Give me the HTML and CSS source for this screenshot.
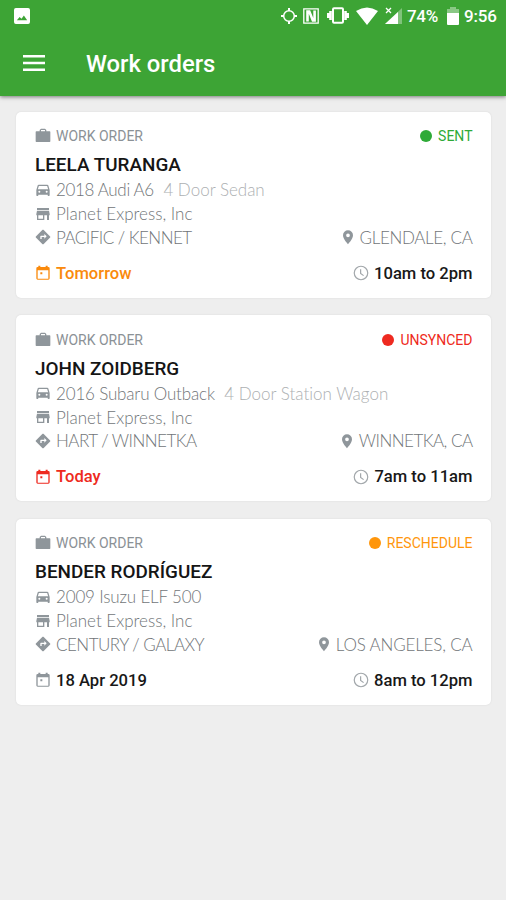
FILE: index.html
```html
<!DOCTYPE html>
<html lang="en">
<head>
<meta charset="utf-8">
<title>Work orders</title>
<link rel="stylesheet" href="styles.css">
</head>
<body>
<svg class="defs" aria-hidden="true">
  <symbol id="case" viewBox="0 0 24 24"><path d="M9 1h6l2 2v2h5a1 1 0 0 1 1 1v14a1 1 0 0 1-1 1H2a1 1 0 0 1-1-1V6a1 1 0 0 1 1-1h5V3zm0 2v2h6V3z" fill-rule="evenodd"/></symbol>
  <symbol id="car" viewBox="0 0 24 24"><path fill-rule="evenodd" d="M19.900 5c-.2-.6-.8-1-1.400-1h-13c-.7 0-1.200.4-1.400 1L2 12v8c0 .6.4 1 1 1h1c.6 0 1-.4 1-1v-1h14v1c0 .6.4 1 1 1h1c.6 0 1-.4 1-1v-8zM6.500 16a1.500 1.500 0 1 1 0-3 1.500 1.500 0 0 1 0 3zm11 0a1.500 1.500 0 1 1 0-3 1.500 1.500 0 0 1 0 3zM4.300 11l1.500-5h12.400l1.500 5z"/></symbol>
  <symbol id="store" viewBox="0 0 24 24"><path fill-rule="evenodd" d="M21 3H3v3h18zm1 11v-2l-1-5H3l-1 5v2h1v7h11v-7h4v7h3v-7zm-10 5H5v-5h7z"/></symbol>
  <symbol id="road" viewBox="0 0 24 24"><path fill-rule="evenodd" d="M22.700 11.300l-10-10a1 1 0 0 0-1.400 0l-10 10a1 1 0 0 0 0 1.400l10 10a1 1 0 0 0 1.400 0l10-10a1 1 0 0 0 0-1.400zM14 14.500V12h-4v3H8v-4a1 1 0 0 1 1-1h5V7.500l3.500 3.500z"/></symbol>
  <symbol id="calendar" viewBox="0 0 24 24"><path fill-rule="evenodd" d="M20 3h-1V1h-3v2H8V1H5v2H4a2 2 0 0 0-2 2v15c0 1.100.9 2 2 2h16a2 2 0 0 0 2-2V5a2 2 0 0 0-2-2zm0 17.500H4V8h16zM8 11h3v3H8z"/></symbol>
  <symbol id="pin" viewBox="0 0 24 24"><path fill-rule="evenodd" d="M12 2a7.500 7.500 0 0 0-7.500 7.500C4.500 15 12 23 12 23s7.500-8 7.500-13.500A7.500 7.500 0 0 0 12 2zm0 10.300a2.800 2.800 0 1 1 0-5.600 2.800 2.800 0 0 1 0 5.600z"/></symbol>
  <symbol id="clock" viewBox="0 0 24 24"><path d="M12 3a9 9 0 1 0 0 18 9 9 0 0 0 0-18zM11.500 7v5.500l4 3" fill="none" stroke="currentColor" stroke-width="1.600"/></symbol>
</svg>
<header class="top">
  <div class="status">
    <svg class="photo" viewBox="0 0 17 17"><path fill-rule="evenodd" d="M2 0h13a2 2 0 0 1 2 2v13a2 2 0 0 1-2 2H2a2 2 0 0 1-2-2V2a2 2 0 0 1 2-2zm1 13h11l-3.500-5-2.500 3.500-2-2z"/></svg>
    <svg class="locate" viewBox="0 0 16 18"><circle cx="8" cy="9" r="5.300" fill="none" stroke="currentColor" stroke-width="1.500"/><path d="M7 1h2v3H7zm0 13h2v3H7zM0 8h3v2H0zm13 0h3v2h-3z"/></svg>
    <svg class="nfc" viewBox="0 0 16 16"><path d="M.8.800h14.400v14.400H.8z" fill="none" stroke="currentColor" stroke-width="1.300"/><path d="M4.500 13.500V3.500h1.800l3.600 9h1.700v-10" fill="none" stroke="currentColor" stroke-width="2.600"/></svg>
    <svg class="vibrate" viewBox="0 0 22 17"><rect x="6" y="1.200" width="10" height="14.600" rx="1" fill="none" stroke="currentColor" stroke-width="2"/><path d="M2.200 4h2.600v9H2.200zM0 6h2.300v5H0zm17.200-2h2.600v9h-2.600zm2.500 2H22v5h-2.300z"/></svg>
    <svg class="wifi" viewBox="0 0 22 18"><path d="M0 4Q11-3 22 4L11 18z"/></svg>
    <svg class="signal" viewBox="0 0 17 17"><path d="M17 1v16H0z" opacity=".35"/><path d="M13 5v12H0z"/><path d="M1 1l5 5m0-5L1 6" fill="none" stroke="currentColor" stroke-width="1.300"/></svg>
    <span class="percent">74%</span>
    <svg class="battery" viewBox="0 0 12 18"><path d="M3 0h6v2h3v5H0V2h3z" opacity=".4"/><path d="M0 6h12v11a1 1 0 0 1-1 1H1a1 1 0 0 1-1-1z"/></svg>
    <span class="time">9:56</span>
  </div>
  <div class="bar">
    <svg class="menu" viewBox="0 0 22 16"><path d="M0 0h22v2.600H0zm0 6.700h22v2.600H0zm0 6.700h22V16H0z"/></svg>
    <h1>Work orders</h1>
  </div>
</header>
<main>
  <article class="card">
    <div class="row head"><svg class="icon case"><use href="#case"/></svg><span class="kind">WORK ORDER</span><span class="state green"><i></i>SENT</span></div>
    <h2>LEELA TURANGA</h2>
    <div class="row"><svg class="icon"><use href="#car"/></svg><span class="snug">2018 Audi A6</span><span class="body">4 Door Sedan</span></div>
    <div class="row"><svg class="icon"><use href="#store"/></svg><span>Planet Express, Inc</span></div>
    <div class="row"><svg class="icon"><use href="#road"/></svg><span class="street">PACIFIC / KENNET</span><span class="right"><svg class="icon pin"><use href="#pin"/></svg><span class="snug">GLENDALE, CA</span></span></div>
    <div class="row when"><svg class="icon orange"><use href="#calendar"/></svg><span class="orange">Tomorrow</span><span class="right"><svg class="icon clock"><use href="#clock"/></svg><span>10am to 2pm</span></span></div>
  </article>
  <article class="card">
    <div class="row head"><svg class="icon case"><use href="#case"/></svg><span class="kind">WORK ORDER</span><span class="state red"><i></i>UNSYNCED</span></div>
    <h2>JOHN ZOIDBERG</h2>
    <div class="row"><svg class="icon"><use href="#car"/></svg><span class="easy">2016 Subaru Outback</span><span class="body">4 Door Station Wagon</span></div>
    <div class="row"><svg class="icon"><use href="#store"/></svg><span>Planet Express, Inc</span></div>
    <div class="row"><svg class="icon"><use href="#road"/></svg><span class="street">HART / WINNETKA</span><span class="right"><svg class="icon pin"><use href="#pin"/></svg><span class="street">WINNETKA, CA</span></span></div>
    <div class="row when"><svg class="icon red"><use href="#calendar"/></svg><span class="red">Today</span><span class="right"><svg class="icon clock"><use href="#clock"/></svg><span>7am to 11am</span></span></div>
  </article>
  <article class="card">
    <div class="row head"><svg class="icon case"><use href="#case"/></svg><span class="kind">WORK ORDER</span><span class="state amber"><i></i>RESCHEDULE</span></div>
    <h2>BENDER RODRÍGUEZ</h2>
    <div class="row"><svg class="icon"><use href="#car"/></svg><span class="easy">2009 Isuzu ELF 500</span></div>
    <div class="row"><svg class="icon"><use href="#store"/></svg><span>Planet Express, Inc</span></div>
    <div class="row"><svg class="icon"><use href="#road"/></svg><span class="street">CENTURY / GALAXY</span><span class="right"><svg class="icon pin"><use href="#pin"/></svg><span class="easy">LOS ANGELES, CA</span></span></div>
    <div class="row when"><svg class="icon"><use href="#calendar"/></svg><span>18 Apr 2019</span><span class="right"><svg class="icon clock"><use href="#clock"/></svg><span>8am to 12pm</span></span></div>
  </article>
</main>
</body>
</html>
```
FILE: styles.css
```css
* { box-sizing: border-box; }
body { margin: 0; min-height: 900px; background: #eee; font-family: Roboto, "Liberation Sans", sans-serif; }
svg { display: block; flex: none; fill: currentColor; }
.defs { position: absolute; width: 0; height: 0; }
.top { height: 96px; background: #3da435; color: #fff; box-shadow: 0 1px 4px rgba(0,0,0,.5); }
.status { display: flex; align-items: center; height: 31px; padding: 0 9px 0 14px; font-size: 17px; font-weight: 500; }
.photo { width: 16px; height: 16px; margin-right: auto; }
.locate { width: 16px; height: 18px; margin-right: 6px; }
.nfc { width: 16px; height: 16px; margin-right: 8px; }
.vibrate { width: 22px; height: 17px; margin-right: 7px; }
.wifi { width: 22px; height: 18px; margin-right: 7px; }
.signal { width: 17px; height: 17px; margin-right: 5px; }
.percent { width: 32px; margin-right: 8px; letter-spacing: -.3px; }
.battery { width: 12px; height: 18px; margin-right: 5px; }
.time { width: 33px; letter-spacing: -.2px; }
.bar { display: flex; align-items: center; height: 64px; padding-left: 23px; }
.menu { width: 22px; height: 16px; margin-right: 41px; }
h1 { margin: 0; padding-top: 1px; font-size: 23.800px; font-weight: 500; }
main { display: flex; flex-direction: column; gap: 17.500px; padding: 15.500px 15px 0 16px; }
.card { height: 186px; padding: 10.500px 18.500px 0 19px; background: #fff; border-radius: 5px; box-shadow: 0 0 2px rgba(0,0,0,.1); }
.row { display: flex; align-items: center; height: 23.700px; font: 300 17px Lato, sans-serif; font-variant-ligatures: none; color: #717578; white-space: nowrap; }
.head { height: 28px; font: 400 14px Roboto, sans-serif; color: #8b9196; }
.icon { width: 16px; height: 16px; margin-right: 5px; color: #8f969b; }
.icon.case { width: 16px; height: 16px; }
.icon.pin { margin-right: 4px; }
.icon.clock { width: 18px; height: 18px; margin-right: 4px; color: #a2a7ab; }
.snug { letter-spacing: -.34px; }
.easy { letter-spacing: -.17px; }
.street { letter-spacing: -.52px; }
.body { margin-left: 9.500px; color: #adb0b2; }
.state, .right { display: flex; align-items: center; margin-left: auto; }
.state i { width: 12px; height: 12px; margin-right: 6px; border-radius: 50%; background: currentColor; }
.state.green { color: #2eaa37; }
.red, .icon.red { color: #ee2a20; }
.state.amber { color: #ff960b; }
.orange, .icon.orange { color: #fa8a0c; }
h2 { height: 28px; margin: 0; font-size: 18.900px; font-weight: 500; line-height: 29px; color: #151515; white-space: nowrap; }
.when { height: 24px; margin-top: 12.200px; font: 500 16.600px Roboto, sans-serif; color: #181818; }
```
